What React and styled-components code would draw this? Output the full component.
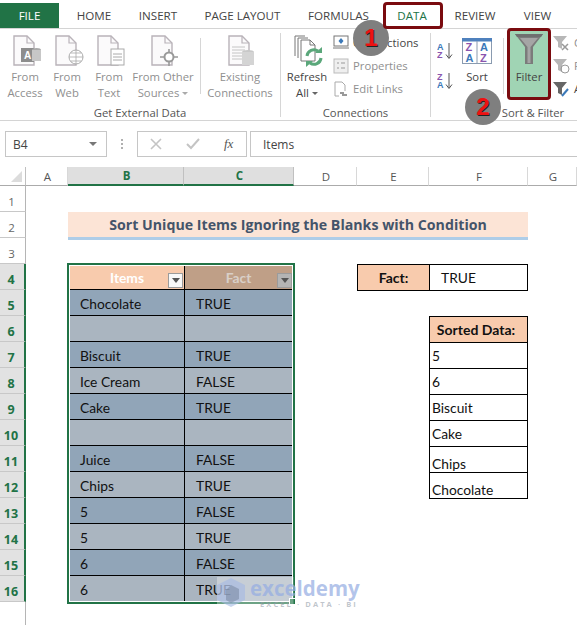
import React from "react";
import styled, { createGlobalStyle } from "styled-components";

const Global = createGlobalStyle`
  html, body { margin: 0; padding: 0; background: #fff; }
  #root { width: 577px; height: 625px; overflow: hidden; }
`;
const Page = styled.div`
  position: relative; width: 577px; height: 625px; overflow: hidden; background: #fff;
  font-family: "Open Sans", "Noto Sans", sans-serif; color: #444;
  display: flex; flex-direction: column;
`;
const TabBar = styled.div`
  display: flex; height: 25px; margin-top: 3px; align-items: stretch; flex: none;
`;
const Tab = styled.div`
  width: ${p => p.$w}px; display: flex; align-items: center; justify-content: center;
  font-size: 11.6px; color: ${p => p.$file ? "#fff" : p.$active ? "#217346" : "#444"};
  background: ${p => p.$file ? "#217346" : "transparent"};
`;
const ActiveMark = styled.div`
  position: absolute; left: 383px; top: 2px; width: 60px; height: 27px; box-sizing: border-box;
  border: 3px solid #7a0b0f; border-radius: 4px;
`;
const Ribbon = styled.div`
  height: 93px; flex: none; display: flex; border-top: 1px solid #d4d4d4; border-bottom: 1px solid #d4d4d4;
  box-sizing: border-box;
`;
const Group = styled.div`
  width: ${p => p.$w}px; flex: none; display: flex; flex-direction: column; box-sizing: border-box;
  border-right: ${p => p.$last ? "none" : "1px solid #d6d6d6"};
  margin: 4px 0 3px;
`;
const GroupBody = styled.div`
  flex: 1; display: flex; align-items: flex-start; min-height: 0; margin-top: -4px;
`;
const GroupLabel = styled.div`
  height: 15px; line-height: 15px; margin-bottom: -3px; text-align: center; font-size: 11.3px; color: #555;
  padding-left: ${p => p.$pl || 0}px; white-space: nowrap;
`;
const BigBtn = styled.div`
  width: ${p => p.$w}px; flex: none; display: flex; flex-direction: column; align-items: center;
  font-size: 11.3px; line-height: 16px; padding-top: 6px; white-space: nowrap; text-align: center;
  color: ${p => p.$on ? "#444" : "#8f8f8f"}; box-sizing: border-box;
`;
const BigIcon = styled.div`
  height: 32px; margin-bottom: 2px; display: flex; align-items: center; justify-content: center;
`;
const DropArrow = styled.i`
  display: inline-block; width: 0; height: 0; margin-left: 3px; vertical-align: 2px;
  border-left: 3px solid transparent; border-right: 3px solid transparent;
  border-top: 3px solid ${p => p.$on ? "#666" : "#aaa"};
`;
const VSep = styled.div`
  width: 1px; height: 56px; margin-top: 9px; background: #d6d6d6; flex: none; margin-left: ${p => p.$ml || 0}px;
`;
const SmallCol = styled.div`
  display: flex; flex-direction: column; padding-top: 2px; flex: none; margin-left: ${p => p.$ml || 0}px;
`;
const SmallRow = styled.div`
  height: 23px; display: flex; align-items: center; gap: 4px; font-size: 11.3px; white-space: nowrap;
  color: ${p => p.$on ? "#444" : "#8f8f8f"};
`;
const SortCol = styled.div`
  width: 26px; display: flex; flex-direction: column; align-items: center; gap: 13px; padding-top: 13px; flex: none; margin-left: 1px;
`;
const FilterBtn = styled.div`
  width: 44px; height: 72px; box-sizing: border-box; border: 3px solid #7a0b0f; border-radius: 4px; background: #a0d4b4;
  display: flex; flex-direction: column; align-items: center; font-size: 11.3px; color: #444; flex: none; margin-left: 3px; margin-top: -1px;
  padding-top: 3px; gap: 5px;
`;
const FormulaBar = styled.div`
  display: flex; height: 26px; margin-top: 10px; flex: none; align-items: stretch;
`;
const NameBox = styled.div`
  width: 102px; margin-left: 5px; box-sizing: border-box; border: 1px solid #c6c6c6; display: flex; align-items: center;
  justify-content: space-between; padding: 0 9px 0 7px; font-size: 12px; color: #444;
`;
const Caret = styled.div`
  width: 0; height: 0; border-left: 4px solid transparent; border-right: 4px solid transparent; border-top: 4px solid #777;
`;
const Dots = styled.div`
  width: 30px; display: flex; flex-direction: column; align-items: center; justify-content: center; gap: 2px;
  & > i { width: 2px; height: 2px; background: #b0b0b0; display: block; }
`;
const FxBox = styled.div`
  width: 110px; box-sizing: border-box; border: 1px solid #c6c6c6; display: flex; align-items: center; padding-left: 12px; gap: 24px;
`;
const Fx = styled.span`
  font-family: "Liberation Serif", serif; font-style: italic; font-size: 13px; color: #555;
`;
const InputBox = styled.div`
  flex: 1; margin-left: 3px; box-sizing: border-box; border: 1px solid #c6c6c6; border-right: none; display: flex; align-items: center;
  padding-left: 12px; font-size: 12px; color: #444;
`;
const Sheet = styled.div`
  margin-top: 10px; display: grid; flex: none;
  grid-template-columns: 26px 42px 116px 110px 63px 72px 99px 49px;
  grid-template-rows: 19px repeat(16, 26px) 24px;
  font-family: "Lato", "Open Sans", sans-serif; font-size: 13.8px; color: #111;
`;
const Corner = styled.div`
  grid-column: 1; grid-row: 1; border-right: 1px solid #c0c0c0; border-bottom: 1px solid #ababab; box-sizing: border-box;
  display: flex; align-items: flex-end; justify-content: flex-end; padding: 0 3px 3px 0;
  & > i { display: block; width: 0; height: 0; border-left: 11px solid transparent; border-bottom: 11px solid #dcdcdc; }
`;
const ColHead = styled.div`
  grid-column: ${p => p.$col}; grid-row: 1; display: flex; align-items: center; justify-content: center; box-sizing: border-box;
  font-family: "Open Sans", sans-serif; padding-left: 2px;
  font-size: 11.5px; font-weight: ${p => p.$sel ? 700 : 400}; color: ${p => p.$sel ? "#217346" : "#555"};
  background: ${p => p.$sel ? "#dfdfdf" : "#fff"};
  border-right: 1px solid ${p => p.$sel ? "#c0c0c0" : "#d8d8d8"};
  border-bottom: ${p => p.$sel ? "2px solid #217346" : "1px solid #ababab"};
`;
const RowHead = styled.div`
  grid-column: 1; grid-row: ${p => p.$row}; display: flex; align-items: center; justify-content: center; box-sizing: border-box;
  font-family: "Open Sans", sans-serif; padding: 5px 2px 0 0;
  font-size: ${p => p.$sel ? 12.5 : 11.5}px; font-weight: ${p => p.$sel ? 700 : 400}; color: ${p => p.$sel ? "#217346" : "#666"};
  background: ${p => p.$sel ? "#e2e2e2" : "#fff"};
  border-bottom: 1px solid #c8c8c8;
  border-right: ${p => p.$sel ? "2px solid #217346" : "1px solid #b5b5b5"};
`;
const HeadRail = styled.div`
  grid-column: 1; grid-row: 18; border-right: 1px solid #b5b5b5;
`;
const TitleBar = styled.div`
  grid-column: 3 / 8; grid-row: 3; background: #fce4d6; border-bottom: 3px solid #aecde8; height: 28px; box-sizing: border-box;
  display: flex; align-items: center; justify-content: center; font-family: "Open Sans", sans-serif;
  font-weight: 700; font-size: 14.2px; color: #44546a; padding-bottom: 1px; white-space: nowrap;
`;
const DataTable = styled.div`
  grid-column: 3 / 5; grid-row: 5 / 18; align-self: start; height: 339px; box-sizing: border-box; border: 2px solid #fff;
  outline: 2px solid #217346; outline-offset: -1px; display: grid; grid-template-columns: 115px 107px;
  grid-template-rows: 24px repeat(11, 26px) 25px; position: relative;
`;
const HeadCell = styled.div`
  background: ${p => p.$dim ? "#bf9f87" : "#f8cbad"}; color: ${p => p.$dim ? "#d9cfc8" : "#fff"};
  font-weight: 700; display: flex; align-items: center; justify-content: center; position: relative;
  border-bottom: 1px solid #000; border-right: ${p => p.$dim ? "none" : "1px solid #000"}; box-sizing: border-box;
`;
const FilterDrop = styled.div`
  position: absolute; right: ${p => p.$dim ? 0 : 1}px; bottom: 1px; width: 15px; height: 15px; box-sizing: border-box;
  border: 1px solid #9b9b9b; background: ${p => p.$dim ? "#b4b4b4" : "#f8f8f8"};
  display: flex; align-items: center; justify-content: center;
`;
const Cell = styled.div`
  background: ${p => p.$dark ? "#91a5b8" : "#aab5c0"}; display: flex; align-items: center; padding: 2px 0 0 ${p => p.$col ? 11 : 10}px;
  box-sizing: border-box; border-bottom: ${p => p.$last ? "none" : "1px solid #000"}; border-right: ${p => p.$col ? "none" : "1px solid #000"};
`;
const FillHandle = styled.div`
  position: absolute; right: -4px; bottom: -4px; width: 5px; height: 5px; background: #217346; border: 1px solid #fff;
`;
const LabelCell = styled.div`
  grid-column: ${p => p.$col}; grid-row: ${p => p.$row}; box-sizing: border-box; border: 1px solid #000; background: #f8cbad;
  margin-right: ${p => p.$flush ? 0 : -1}px; margin-bottom: -1px; font-size: 14px; padding-right: ${p => p.$flush ? 5 : 0}px;
  font-weight: 700; display: flex; align-items: center; justify-content: center; white-space: nowrap;
`;
const ValueCell = styled.div`
  grid-column: ${p => p.$col}; grid-row: ${p => p.$row}; box-sizing: border-box; border: 1px solid #000; margin-bottom: -1px;
  display: flex; align-items: ${p => p.$low ? "flex-end" : "center"}; padding-left: ${p => p.$pl}px; background: #fff;
`;
const Badge = styled.div`
  position: absolute; left: ${p => p.$x}px; top: ${p => p.$y}px; width: 36px; height: 36px; border-radius: 50%;
  background: #7f7f7f; display: flex; align-items: center; justify-content: center;
  font-family: "Liberation Sans", sans-serif; font-weight: 700; font-size: 24px; color: #ee1111;
  text-shadow: 1px 1px 0 #222;
`;
const Watermark = styled.div`
  position: absolute; left: 217px; top: 577px; width: 160px; height: 31px; display: flex; gap: 5px; pointer-events: none;
  background: linear-gradient(90deg, rgba(255,255,255,.34) 0 76px, rgba(255,255,255,0) 77px);
`;
const WmText = styled.div`
  display: flex; flex-direction: column; font-family: "Open Sans", sans-serif; color: rgba(150,173,226,.72);
`;
const WmName = styled.div`
  font-size: 20.5px; font-weight: 700; line-height: 23px;
`;
const WmSub = styled.div`
  font-size: 7.5px; font-weight: 700; letter-spacing: 2.1px; line-height: 9px; color: rgba(150,158,170,.6); margin-left: 10px; white-space: nowrap;
`;

const Doc = ({ children, c = "#b9b3b9" }) => (
  <svg width="34" height="32" viewBox="0 0 34 32">
    <g transform="translate(5 0)">
      <path d="M1 1H14L21 8V30H1Z" fill="#fbfafb" stroke={c} strokeWidth="1.4" />
      <path d="M14 1V8H21" fill="none" stroke={c} strokeWidth="1.2" />
      {children}
    </g>
  </svg>
);
const Funnel = () => (
  <svg width="28" height="30" viewBox="0 0 28 30">
    <path d="M0 0H28L18 13V30H10V13Z" fill="#7b7b7b" />
    <path d="M5 4H23L15.5 13V29H12.5V13Z" fill="#a5a5a5" />
    <path d="M0 0H28L26 3H2Z" fill="#6f6f6f" />
  </svg>
);
const MiniFunnel = ({ c = "#b7b7b7", children }) => (
  <svg width="17" height="16" viewBox="0 0 17 16">
    <path d="M0 1H14L9 7V14L5 12V7Z" fill={c} />
    {children}
  </svg>
);
const SortGlyph = ({ top, bottom }) => (
  <svg width="16" height="17" viewBox="0 0 16 17" style={{ fontFamily: "Liberation Sans", fontSize: 9, fontWeight: 700 }}>
    <text x="0" y="8" fill={top === "A" ? "#3b79b9" : "#8a55ae"}>{top}</text>
    <text x="0" y="16" fill={bottom === "A" ? "#3b79b9" : "#8a55ae"}>{bottom}</text>
    <path d="M12 1V16M9 12.5L12 16.5L15 12.5" fill="none" stroke="#555" strokeWidth="1" />
  </svg>
);
const SortBig = () => (
  <svg width="30" height="26" viewBox="0 0 30 26" style={{ fontFamily: "Liberation Sans", fontSize: 11, fontWeight: 700 }}>
    <rect x=".5" y=".5" width="29" height="25" fill="#fff" stroke="#8a9bb0" />
    <rect x="0" y="0" width="30" height="3.5" fill="#4f81bd" />
    <path d="M15 3V26" stroke="#8a9bb0" />
    <text x="3.5" y="13" fill="#8a55ae">Z</text><text x="3.5" y="24" fill="#3b79b9">A</text>
    <text x="18" y="13" fill="#3b79b9">A</text><text x="18" y="24" fill="#8a55ae">Z</text>
  </svg>
);
const RefreshIcon = () => (
  <svg width="34" height="32" viewBox="0 0 34 32">
    <path d="M5 1H15M5 1V21M8 3H18M8 3V23" fill="none" stroke="#777" />
    <path d="M11 5H20L25 10V26H11Z" fill="#fff" stroke="#777" />
    <path d="M20 5V10H25" fill="none" stroke="#777" />
    <path d="M17 21A7 7 0 0 1 28 16" fill="none" stroke="#5aa77a" strokeWidth="3" />
    <path d="M31 23A7 7 0 0 1 20 28" fill="none" stroke="#5aa77a" strokeWidth="3" />
    <path d="M25 18H32V12Z" fill="#5aa77a" />
    <path d="M23 26H16V32Z" fill="#5aa77a" />
  </svg>
);

const items = [
  ["Chocolate", "TRUE"], ["", ""], ["Biscuit", "TRUE"], ["Ice Cream", "FALSE"], ["Cake", "TRUE"], ["", ""],
  ["Juice", "FALSE"], ["Chips", "TRUE"], ["5", "FALSE"], ["5", "TRUE"], ["6", "FALSE"], ["6", "TRUE"],
];
const sorted = ["5", "6", "Biscuit", "Cake", "Chips", "Chocolate"];
const cols = [["A", 2], ["B", 3, true], ["C", 4, true], ["D", 5], ["E", 6], ["F", 7], ["G", 8]];
const Tri = () => (
  <svg width="8" height="5" viewBox="0 0 8 5"><path d="M0 0H8L4 5Z" fill="#555" /></svg>
);

export default function App() {
  return (
    <Page>
      <Global />
      <TabBar>
        <Tab $file $w={59}>FILE</Tab>
        <Tab $w={70}>HOME</Tab>
        <Tab $w={58}>INSERT</Tab>
        <Tab $w={111}>PAGE LAYOUT</Tab>
        <Tab $w={81}>FORMULAS</Tab>
        <Tab $active $w={66}>DATA</Tab>
        <Tab $w={60}>REVIEW</Tab>
        <Tab $w={65}>VIEW</Tab>
      </TabBar>
      <Ribbon>
        <Group $w={281}>
          <GroupBody>
            <BigBtn $w={50}><BigIcon><Doc>
              <rect x="8" y="13" width="13" height="14" fill="#8d8d8d" /><text x="11" y="24" fontSize="10" fontWeight="700" fontFamily="Liberation Sans" fill="#fff">A</text>
              <ellipse cx="23.5" cy="15" rx="4.5" ry="2" fill="#aaa" /><rect x="19" y="15" width="9" height="11" fill="#c7c7c7" />
            </Doc></BigIcon>From<br />Access</BigBtn>
            <BigBtn $w={34}><BigIcon><Doc>
              <circle cx="21" cy="22" r="7" fill="#fff" stroke="#aaa" /><path d="M14 22H28M21 15V29M16 18H26M16 26H26" stroke="#aaa" strokeWidth=".8" />
            </Doc></BigIcon>From<br />Web</BigBtn>
            <BigBtn $w={50}><BigIcon><Doc>
              <rect x="14" y="14" width="13" height="16" fill="#fff" stroke="#aaa" /><path d="M16 19H25M16 22H25M16 25H25" stroke="#aaa" />
            </Doc></BigIcon>From<br />Text</BigBtn>
            <BigBtn $w={58}><BigIcon><Doc>
              <circle cx="18" cy="22" r="4.5" fill="#fff" stroke="#999" strokeWidth="2" /><path d="M18 14V17M18 27V31M9 22H13M23 22H27" stroke="#999" strokeWidth="1.6" />
            </Doc></BigIcon>From Other<br /><span>Sources<DropArrow /></span></BigBtn>
            <VSep $ml={8} />
            <BigBtn $w={78}><BigIcon><Doc>
              <path d="M4 12H17M4 15H17M4 18H15M4 21H15M4 24H15" stroke="#c4c4c4" /><ellipse cx="20" cy="17" rx="6" ry="2" fill="#c8c8c8" /><rect x="14" y="17" width="12" height="13" fill="#d4d4d4" />
            </Doc></BigIcon>Existing<br />Connections</BigBtn>
          </GroupBody>
          <GroupLabel>Get External Data</GroupLabel>
        </Group>
        <Group $w={150}>
          <GroupBody>
            <BigBtn $on $w={52}><BigIcon><RefreshIcon /></BigIcon>Refresh<br /><span>All<DropArrow $on /></span></BigBtn>
            <SmallCol>
              <SmallRow $on><svg width="16" height="16" viewBox="0 0 16 16"><rect x="1" y="1" width="14" height="10" fill="#fff" stroke="#777" /><path d="M8 3L10.5 6L8 9L5.5 6Z" fill="#3b79b9" /><path d="M0 13H16" stroke="#777" /></svg>Connections</SmallRow>
              <SmallRow><svg width="16" height="16" viewBox="0 0 16 16"><rect x="1" y="1" width="14" height="14" fill="#efefef" stroke="#bbb" /><path d="M4 5H6M8 5H12M4 10H6M8 10H12" stroke="#999" /></svg>Properties</SmallRow>
              <SmallRow><svg width="16" height="16" viewBox="0 0 16 16"><path d="M2 1H9L12 4V10M2 1V15H6" fill="none" stroke="#aaa" /><path d="M7 12H11M9 14H14" stroke="#999" strokeWidth="2" /></svg>Edit Links</SmallRow>
            </SmallCol>
          </GroupBody>
          <GroupLabel>Connections</GroupLabel>
        </Group>
        <Group $w={146} $last>
          <GroupBody>
            <SortCol><SortGlyph top="A" bottom="Z" /><SortGlyph top="Z" bottom="A" /></SortCol>
            <BigBtn $on $w={38}><BigIcon><SortBig /></BigIcon>Sort</BigBtn>
            <VSep $ml={7} />
            <FilterBtn><Funnel />Filter</FilterBtn>
            <SmallCol $ml={2}>
              <SmallRow><MiniFunnel><path d="M9 9L15 15M15 9L9 15" stroke="#999" strokeWidth="1.5" /></MiniFunnel>Clear</SmallRow>
              <SmallRow><MiniFunnel><circle cx="12" cy="11" r="4" fill="none" stroke="#999" /></MiniFunnel>Reapply</SmallRow>
              <SmallRow $on><MiniFunnel c="#666"><path d="M9 15L15 8" stroke="#3b79b9" strokeWidth="2" /></MiniFunnel>Advanced</SmallRow>
            </SmallCol>
          </GroupBody>
          <GroupLabel $pl={58}>Sort &amp; Filter</GroupLabel>
        </Group>
      </Ribbon>
      <FormulaBar>
        <NameBox>B4<Caret /></NameBox>
        <Dots><i /><i /><i /></Dots>
        <FxBox>
          <svg width="12" height="12" viewBox="0 0 12 12"><path d="M1 1L11 11M11 1L1 11" stroke="#c4c4c4" strokeWidth="1.6" /></svg>
          <svg width="14" height="12" viewBox="0 0 14 12"><path d="M1 6L5 10L13 1" fill="none" stroke="#c4c4c4" strokeWidth="2" /></svg>
          <Fx>fx</Fx>
        </FxBox>
        <InputBox>Items</InputBox>
      </FormulaBar>
      <Sheet>
        <Corner><i /></Corner>
        {cols.map(([l, c, s]) => <ColHead key={l} $col={c} $sel={s}>{l}</ColHead>)}
        {Array.from({ length: 16 }, (_, i) => (
          <RowHead key={i} $row={i + 2} $sel={i >= 3}>{i + 1}</RowHead>
        ))}
        <HeadRail />
        <TitleBar>Sort Unique Items Ignoring the Blanks with Condition</TitleBar>
        <DataTable>
          <HeadCell>Items<FilterDrop><Tri /></FilterDrop></HeadCell>
          <HeadCell $dim>Fact<FilterDrop $dim><Tri /></FilterDrop></HeadCell>
          {items.map(([a, b], i) => (
            <React.Fragment key={i}>
              <Cell $dark={i % 2 === 0} $last={i === 11}>{a}</Cell>
              <Cell $col $dark={i % 2 === 0} $last={i === 11}>{b}</Cell>
            </React.Fragment>
          ))}
          <FillHandle />
        </DataTable>
        <LabelCell $col={6} $row={5}>Fact:</LabelCell>
        <ValueCell $col={7} $row={5} $pl={11}>TRUE</ValueCell>
        <LabelCell $col={7} $row={7} $flush>Sorted Data:</LabelCell>
        {sorted.map((s, i) => <ValueCell key={s} $col={7} $row={8 + i} $pl={2} $low={i > 3}>{s}</ValueCell>)}
      </Sheet>
      <Badge $x={353} $y={20}>1</Badge>
      <Badge $x={465} $y={89}>2</Badge>
      <ActiveMark />
      <Watermark>
        <svg width="28" height="31" viewBox="0 0 28 31">
          <path d="M14 1L28 8V23L14 30L0 23V8Z" fill="rgba(165,185,228,.62)" />
          <path d="M14 8L22 12V22L14 26L9 23V13Z" fill="rgba(120,135,160,.55)" />
        </svg>
        <WmText><WmName>exceldemy</WmName><WmSub>EXCEL · DATA · BI</WmSub></WmText>
      </Watermark>
    </Page>
  );
}
